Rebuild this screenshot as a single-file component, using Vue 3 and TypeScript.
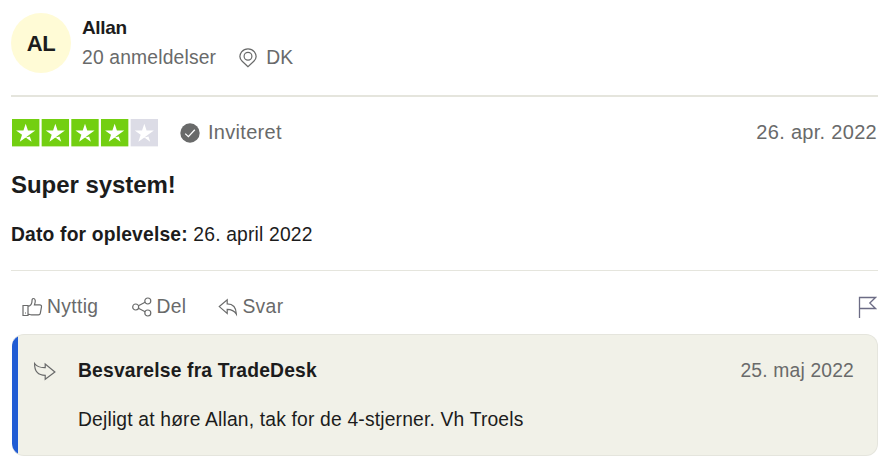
<script setup lang="ts">
interface Review {
  initials: string
  name: string
  count: string
  country: string
  rating: number
  date: string
  title: string
  experienced: string
}

const review: Review = {
  initials: 'AL',
  name: 'Allan',
  count: '20 anmeldelser',
  country: 'DK',
  rating: 4,
  date: '26. apr. 2022',
  title: 'Super system!',
  experienced: '26. april 2022',
}

const reply = {
  heading: 'Besvarelse fra TradeDesk',
  date: '25. maj 2022',
  text: 'Dejligt at høre Allan, tak for de 4-stjerner. Vh Troels',
}

const stars: boolean[] = Array.from({ length: 5 }, (_, i) => i < review.rating)
</script>

<template>
  <article class="review">
    <header class="author">
      <div class="avatar">{{ review.initials }}</div>
      <div class="who">
        <div class="name">{{ review.name }}</div>
        <div class="meta">
          <span>{{ review.count }}</span>
          <svg class="pin" width="18" height="20" viewBox="0 0 18 20" fill="none" stroke="currentColor" stroke-width="1.2">
            <path d="M9 18.700 3.200 13.200C-.2 9.900 1 6 2.600 3.800 6-.2 12-.2 15.400 3.800 17 6 18.200 9.900 14.800 13.200Z" />
            <circle cx="9" cy="8.300" r="3.900" />
          </svg>
          <span>{{ review.country }}</span>
        </div>
      </div>
    </header>

    <section class="content">
      <div class="rating-row">
        <svg class="stars" width="146" height="27.4" viewBox="0 0 512 96">
          <g v-for="(on, i) in stars" :key="i" :transform="`translate(${i * 104} 0)`">
            <rect width="96" height="96" :fill="on ? '#73cf11' : '#dcdce6'" />
            <path fill="#fff" d="M48 64.700 62.600 61l6.100 18.800zm33.600-24.300H55.900L48 16.200l-7.900 24.200H14.400l20.800 15-7.900 24.200 20.800-15 12.800-9.200z" />
          </g>
        </svg>
        <svg class="check" width="20" height="20" viewBox="0 0 20 20">
          <circle cx="10" cy="10" r="9.700" fill="#696a6a" />
          <path d="m5.200 10.600 3.200 3 6.400-6.900" fill="none" stroke="#fff" stroke-width="1.300" />
        </svg>
        <span>Inviteret</span>
        <time class="end">{{ review.date }}</time>
      </div>
      <h2>{{ review.title }}</h2>
      <p class="experience"><b>Dato for oplevelse:</b> {{ review.experienced }}</p>
    </section>

    <div class="actions">
      <button class="useful">
        <svg width="21" height="20" viewBox="0 0 21 20" fill="none" stroke="currentColor" stroke-width="1.200">
          <path d="M1 8.500h5v10H1zM6 9.500c3-.8 4-3 4-5.500 0-1.300.3-2.500 1.300-2.500 2.200 0 2.500 3 1.200 6.300h5.200c1.300 0 2 .8 1.800 2l-1.200 6.500c-.2 1-.9 1.600-1.900 1.600H9.500c-1.500 0-2-.8-3.500-.8M3 16h1" />
        </svg>
        <span>Nyttig</span>
      </button>
      <button class="share">
        <svg width="20" height="20" viewBox="0 0 20 20" fill="none" stroke="currentColor" stroke-width="1.200">
          <circle cx="3.700" cy="10" r="3" />
          <circle cx="15.800" cy="4" r="3" />
          <circle cx="15.800" cy="16" r="3" />
          <path d="m6.400 8.700 6.700-3.400M6.400 11.300l6.700 3.400" />
        </svg>
        <span>Del</span>
      </button>
      <button class="answer">
        <svg width="20" height="20" viewBox="0 0 20 20" fill="none" stroke="currentColor" stroke-width="1.200">
          <path d="M9.200 2.700v4.100c5.300 0 9 3.200 9.200 10.400-2.200-3.500-4.500-4.800-9.200-4.800v4L1.300 9.600z" />
        </svg>
        <span>Svar</span>
      </button>
      <svg class="flag" width="20" height="22" viewBox="0 0 20 22" fill="none" stroke="currentColor" stroke-width="1.300">
        <path d="M2.500 22V1.500h16l-5.700 5.500 5.700 5.500h-16" />
      </svg>
    </div>

    <section class="reply">
      <svg class="reply-icon" width="24" height="22" viewBox="0 0 24 22" fill="none" stroke="currentColor" stroke-width="1.200">
        <path d="M1.600 2.500c2.200 3 5 4.300 10.600 4.100V3l9.700 8-9.700 7.300v-3.900C5.300 14.400 1.300 10.500 1.600 2.500Z" />
      </svg>
      <div class="reply-body">
        <div class="reply-head">
          <b>{{ reply.heading }}</b>
          <time class="end">{{ reply.date }}</time>
        </div>
        <p>{{ reply.text }}</p>
      </div>
    </section>
  </article>
</template>

<style>
body {
  margin: 0;
  background: #fff;
}
</style>

<style scoped>
.review {
  box-sizing: border-box;
  width: 888px;
  height: 472px;
  padding: 13px 10px 0 11px;
  font: 19.3px/30px "Liberation Sans", Arial, sans-serif;
  letter-spacing: 0.17px;
  color: #1c1c1c;
  white-space: nowrap;
}
.author {
  display: flex;
  height: 82px;
  border-bottom: 2px solid #e5e5dd;
}
.avatar {
  width: 60px;
  height: 60px;
  border-radius: 50%;
  background: #fffbd6;
  font-size: 22px;
  font-weight: 700;
  line-height: 61px;
  letter-spacing: -0.5px;
  text-align: center;
}
.who {
  margin-left: 11px;
}
.name {
  font-size: 19px;
  font-weight: 700;
  letter-spacing: -0.35px;
}
.meta {
  display: flex;
  align-items: center;
  line-height: 29px;
  color: #696a6a;
}
.pin {
  margin: 0 8px 0 23px;
}
.meta span:last-child {
  margin-left: 1px;
}
.content {
  height: 173px;
  border-bottom: 1px solid #e5e5dd;
}
.rating-row {
  display: flex;
  align-items: center;
  padding: 21px 1px 0 0;
  height: 30px;
  font-size: 20px;
  letter-spacing: 0.3px;
  color: #696a6a;
}
.rating-row span,
.rating-row time {
  padding-bottom: 2px;
}
.stars {
  margin-left: 1px;
}
.check {
  margin: 0 8px 0 22px;
}
.end {
  margin-left: auto;
}
h2 {
  margin: 21px 0 0;
  font-size: 24px;
  line-height: 32px;
  letter-spacing: -0.05px;
}
.experience {
  margin: 19px 0 0;
}
.actions {
  display: flex;
  align-items: center;
  height: 30px;
  padding: 21px 1px 13px 11px;
  color: #696a6a;
}
button {
  display: flex;
  align-items: center;
  gap: 4px;
  padding: 0;
  border: 0;
  background: none;
  font: inherit;
  letter-spacing: 0.35px;
  color: inherit;
}
.share {
  margin-left: 34px;
}
.answer {
  margin-left: 32px;
}
.flag {
  margin-left: auto;
  color: #6c6c85;
}
.reply {
  box-sizing: border-box;
  display: flex;
  height: 122px;
  padding: 21px 23px 0 15px;
  border: 1px solid #e5e5dd;
  border-left: 0;
  border-radius: 12px;
  margin: -1px 0 0 1px;
  background: linear-gradient(90deg, #205cd4 6px, #f1f1e8 6px);
}
.reply-icon {
  margin: 5px 0 0 6px;
  color: #696a6a;
}
.reply-body {
  flex: 1;
  margin-left: 21px;
}
.reply-head {
  display: flex;
}
.reply-head time {
  color: #696a6a;
}
.reply p {
  margin: 19px 0 0;
}
</style>
